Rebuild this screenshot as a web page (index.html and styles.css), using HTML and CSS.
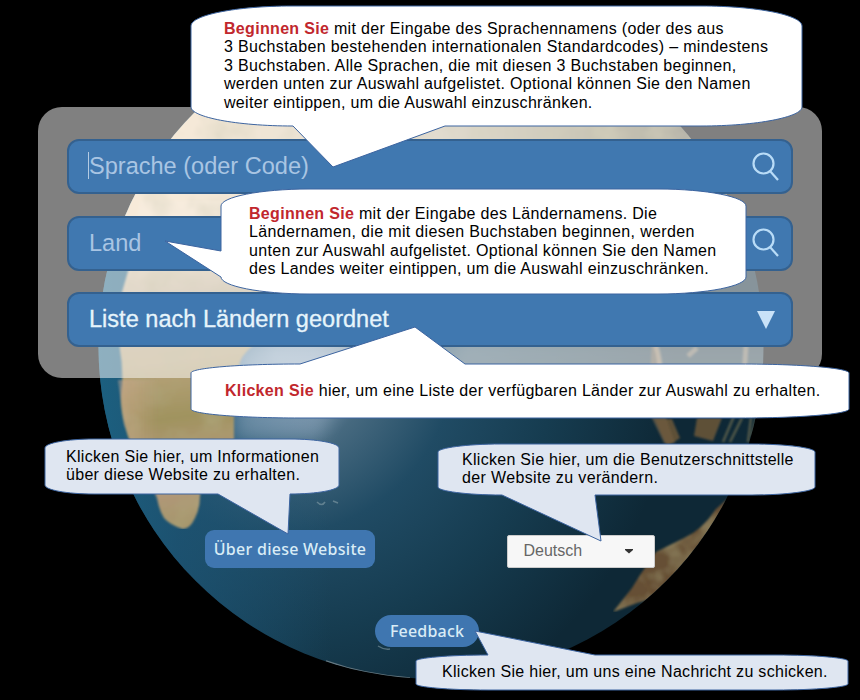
FILE: index.html
```html
<!DOCTYPE html>
<html lang="de">
<head>
<meta charset="utf-8">
<title>Global Recordings</title>
<link rel="stylesheet" href="styles.css">
</head>
<body>
<main class="stage">
  <svg class="globe" viewBox="0 0 860 700" aria-hidden="true">
    <defs>
      <radialGradient id="sea" gradientUnits="userSpaceOnUse" cx="275" cy="355" r="400">
        <stop offset="0" stop-color="#a3b5c9"/><stop offset=".1" stop-color="#839db5"/><stop offset=".25" stop-color="#46697f"/>
        <stop offset=".45" stop-color="#204b64"/><stop offset=".7" stop-color="#163c50"/><stop offset="1" stop-color="#0e2836"/>
      </radialGradient>
      <linearGradient id="rim" x1="0" x2="1" y1="0" y2="0">
        <stop offset="0" stop-color="#1c6080"/><stop offset=".12" stop-color="#1c5474" stop-opacity=".8"/><stop offset=".35" stop-color="#1c5474" stop-opacity="0"/>
      </linearGradient>
      <linearGradient id="land" gradientUnits="userSpaceOnUse" x1="150" y1="120" x2="200" y2="520">
        <stop offset="0" stop-color="#e8d2b0"/><stop offset=".25" stop-color="#efd9bc"/><stop offset=".45" stop-color="#bba98c"/>
        <stop offset=".6" stop-color="#b8a47c"/><stop offset=".74" stop-color="#a0935f"/><stop offset=".88" stop-color="#b89a80"/><stop offset="1" stop-color="#a6956c"/>
      </linearGradient>
      <linearGradient id="coast" gradientUnits="userSpaceOnUse" x1="118" y1="0" x2="160" y2="0">
        <stop offset="0" stop-color="#d3ad96" stop-opacity=".8"/><stop offset="1" stop-color="#d3ad96" stop-opacity="0"/>
      </linearGradient>
      <linearGradient id="north" gradientUnits="userSpaceOnUse" x1="170" y1="0" x2="750" y2="0">
        <stop offset="0" stop-color="#eed5b2"/><stop offset=".45" stop-color="#c5b9a0"/><stop offset=".75" stop-color="#8f8768"/><stop offset="1" stop-color="#565444"/>
      </linearGradient>
      <filter id="rough" x="0" y="0" width="1" height="1">
        <feTurbulence type="fractalNoise" baseFrequency=".035" numOctaves="3" seed="8" result="n"/>
        <feColorMatrix in="n" values="0 0 0 0 .42  0 0 0 0 .38  0 0 0 0 .2  1.2 0 0 0 -.5" result="t"/>
        <feComposite in="t" in2="SourceGraphic" operator="in" result="p"/>
        <feMerge><feMergeNode in="SourceGraphic"/><feMergeNode in="p"/></feMerge>
        <feGaussianBlur stdDeviation=".8"/>
      </filter>
      <filter id="soft"><feGaussianBlur stdDeviation="8"/></filter>
      <filter id="haze"><feGaussianBlur stdDeviation="1.200"/></filter>
      <clipPath id="disc"><circle cx="431" cy="346" r="332.500"/></clipPath>
    </defs>
    <g clip-path="url(#disc)">
      <rect width="860" height="700" fill="url(#sea)"/>
      <rect x="98" width="666" height="700" fill="url(#rim)"/>
      <path d="M240 352H360L320 440H234Z" fill="#b7c8db" opacity=".3" filter="url(#soft)"/>
      <path d="M460 340H780V385H440Z" fill="#6c7b82" opacity=".45" filter="url(#soft)"/>
      <path d="M90 0H740V215H560L220 230H90Z" fill="url(#north)" filter="url(#rough)"/>
      <path d="M140 200H330L300 300L262 340Q244 350 240 362Q233 380 234 400V440Q226 458 214 468Q202 480 200 496Q200 508 195 518Q190 529 183 529Q170 525 164 518Q159 510 157 498Q150 480 142 466Q129 445 125 425Q119 404 122 384Q123 366 120 350Q117 320 122 292L129 268Z" fill="url(#land)" filter="url(#rough)"/>
      <path d="M118 380H160V440L176 520L162 516L142 466L124 425Z" fill="url(#coast)" opacity=".6" filter="url(#haze)"/>
      <g filter="url(#haze)">
        <path d="M652 340L657 346L664 376L660 400L675 443H664L648 410Z" fill="#826b4c" opacity=".6"/>
        <path d="M655 419H672L680 438L667 447Z M697 418H722L713 441L694 436Z" fill="#725a3a" opacity=".8"/>
        <path d="M734 416L723 442M742 418L730 442M751 418L748 442M757 416L752 436" fill="none" stroke="#6f6d51" stroke-width="2.500" opacity=".7"/>
        <path d="M656 346Q660 356 661 380M697 348L688 356M746 346L744 376" fill="none" stroke="#c2a27c" stroke-width="5" opacity=".5"/>
      </g>
      <path d="M740 488L716 509Q702 530 684 538L656 552L640 575L632 588L613 612L637 603L662 596L725 545L768 488Z" fill="#665036" filter="url(#rough)"/>
      <path d="M378 646Q384 650 390 649M317 502Q322 507 325 502M333 501L338 503" fill="none" stroke="#a4b7bd" stroke-width="1.500" opacity=".45"/>
      <path d="M326 661Q365 675 410 678" fill="none" stroke="#9ba4a7" stroke-width="1.500" opacity=".6"/>
    </g>
  </svg>

  <form class="panel">
    <label class="field"><span class="hint caret">Sprache (oder Code)</span>
      <svg class="lens" viewBox="0 0 28 30"><circle cx="11.500" cy="11.500" r="10"/><path d="M18 19L26 28"/></svg></label>
    <label class="field"><span class="hint">Land</span>
      <svg class="lens" viewBox="0 0 28 30"><circle cx="11.500" cy="11.500" r="10"/><path d="M18 19L26 28"/></svg></label>
    <div class="field"><span class="choice">Liste nach Ländern geordnet</span>
      <svg class="arrow" viewBox="0 0 20 20"><path d="M1 1H19L10 19Z"/></svg></div>
  </form>

  <nav class="links">
    <a class="about">Über diese Website</a>
    <div class="lang"><span>Deutsch</span><svg viewBox="0 0 8 6"><path d="M0 1H8V2L4 5.500L0 2Z"/></svg></div>
  </nav>
  <div class="foot"><a class="feedback">Feedback</a></div>

  <aside class="callout c1">
    <svg viewBox="0 0 611 120"><path d="M0 20C0 9 45 0 101 0H510C566 0 611 9 611 20V101C611 111 566 120 510 120H254L142 161L102 120C45 120 0 111 0 101Z"/></svg>
    <p><span class="l1"><b>Beginnen Sie</b> mit der Eingabe des Sprachennamens (oder des aus</span><span class="l2">3 Buchstaben bestehenden internationalen Standardcodes) – mindestens</span><span class="l3">3 Buchstaben. Alle Sprachen, die mit diesen 3 Buchstaben beginnen,</span><span class="l4">werden unten zur Auswahl aufgelistet. Optional können Sie den Namen</span><span class="l5">weiter eintippen, um die Auswahl einzuschränken.</span></p>
  </aside>
  <aside class="callout c2">
    <svg viewBox="0 0 525 105"><path d="M0 17C0 8 39 0 88 0H437C486 0 525 8 525 17V88C525 97 486 105 437 105H88C39 105 0 97 0 88L-56 52L0 62Z"/></svg>
    <p><span class="l1"><b>Beginnen Sie</b> mit der Eingabe des Ländernamens. Die</span><span class="l2">Ländernamen, die mit diesen Buchstaben beginnen, werden</span><span class="l3">unten zur Auswahl aufgelistet. Optional können Sie den Namen</span><span class="l4">des Landes weiter eintippen, um die Auswahl einzuschränken.</span></p>
  </aside>
  <aside class="callout c3">
    <svg viewBox="0 0 658 54"><path d="M0 9C0 4 49 0 109 0L224 -37L274 0H549C609 0 658 4 658 9V45C658 50 609 54 549 54H109C49 54 0 50 0 45Z"/></svg>
    <p><span class="l1"><b>Klicken Sie</b> hier, um eine Liste der verfügbaren Länder zur Auswahl zu erhalten.</span></p>
  </aside>
  <aside class="callout pale c4">
    <svg viewBox="0 0 294 55"><path d="M0 9C0 4 22 0 49 0H245C272 0 294 4 294 9V46C294 51 272 55 245 55L243 95L173 55H49C22 55 0 51 0 46Z"/></svg>
    <p><span class="l1">Klicken Sie hier, um Informationen</span><span class="l2">über diese Website zu erhalten.</span></p>
  </aside>
  <aside class="callout pale c5">
    <svg viewBox="0 0 377 51"><path d="M0 8C0 4 28 0 63 0H314C349 0 377 4 377 8V43C377 47 349 51 314 51H157L163 97L64 51C28 51 0 47 0 43Z"/></svg>
    <p><span class="l1">Klicken Sie hier, um die Benutzerschnittstelle</span><span class="l2">der Website zu verändern.</span></p>
  </aside>
  <aside class="callout pale c6">
    <svg viewBox="0 0 432 35"><path d="M0 6C0 3 32 0 72 0L59 -24L179 0H360C400 0 432 3 432 6V29C432 32 400 35 360 35H72C32 35 0 32 0 29Z"/></svg>
    <p><span class="l1">Klicken Sie hier, um uns eine Nachricht zu schicken.</span></p>
  </aside>
</main>
</body>
</html>
```
FILE: styles.css
```css
* { box-sizing: border-box; }
body { margin: 0; background: #000; font-family: "Liberation Sans", Arial, sans-serif; }
.stage { position: relative; width: 860px; height: 700px; overflow: hidden; background: #000; padding-top: 107px; }
.globe { position: absolute; inset: 0; width: 860px; height: 700px; }

.panel { position: relative; width: 784px; height: 271px; margin-left: 38px; padding: 32px 29px 0; border-radius: 24px;
  background: rgba(255, 255, 255, .5); display: flex; flex-direction: column; gap: 21.500px; }
.field { display: flex; align-items: center; justify-content: space-between; height: 55px; flex: none;
  padding: 0 12px 0 20px; border: 2px solid #34618f; border-radius: 12px; background: #4078b0; }
.hint, .choice { font-size: 23.550px; line-height: 28px; color: #a9c5e3; white-space: nowrap; margin-bottom: 1px; }
.choice { color: #e6f4fb; -webkit-text-stroke: .3px #e6f4fb; }
.caret { position: relative; }
.caret::before { content: ""; position: absolute; left: -1px; top: 0; width: 1px; height: 27px; background: #b4cbe3; }
.lens { width: 28px; height: 30px; margin-right: -1px; fill: none; stroke: #b9dcf7; stroke-width: 2.200; }
.arrow { width: 20px; height: 20px; margin: 0 3px 0 0; fill: #c9e2f8; }

.links { position: relative; display: flex; align-items: center; justify-content: space-between; height: 38px;
  margin: 152px 205px 0; }
.about { display: flex; align-items: center; justify-content: center; width: 170px; height: 38px; border-radius: 9px;
  background: #3f76b0; color: #d9ecf6; font: 500 16px "Noto Sans", sans-serif; letter-spacing: .27px; white-space: nowrap; }
.lang { display: flex; align-items: center; justify-content: space-between; width: 148px; height: 33px; margin-top: 4px;
  padding: 0 21px 0 15.500px; border: 1px solid #ccc; border-radius: 2px; background: #f7f7f7; color: #666; font-size: 16px; }
.lang svg { width: 8px; height: 6px; fill: #333; }
.foot { position: relative; display: flex; justify-content: center; margin-top: 47px; padding-right: 6px; }
.feedback { display: flex; align-items: center; justify-content: center; width: 104px; height: 32px; border-radius: 16px;
  background: #3f76b0; color: #d9ecf6; font: 500 16px "Noto Sans", sans-serif; letter-spacing: .2px; }

.callout { position: absolute; }
.callout > svg { position: absolute; inset: 0; width: 100%; height: 100%; overflow: visible; fill: #fff; stroke: #3c64a0; stroke-width: 1; }
.pale > svg { fill: #dfe6f1; }
.callout p { position: relative; margin: 0; font-size: 16px; line-height: 18.600px; letter-spacing: .32px; color: #000; white-space: nowrap; }
.callout span { display: block; }
.callout b { color: #c1272d; }
.c1 { left: 191px; top: 5.500px; width: 611px; height: 120px; padding: 14px 0 0 33px; }
.c1 .l2, .c1 .l3, .c2 .l2 { letter-spacing: .34px; }
.c1 .l5, .c4 span, .c6 .l1 { letter-spacing: .305px; }
.c2 { left: 220.500px; top: 189px; width: 525px; height: 105px; padding: 15.500px 0 0 28.500px; }
.c3 { left: 191px; top: 363.500px; width: 658px; height: 54px; padding: 18px 0 0 34px; }
.c4 { left: 45px; top: 438.500px; width: 294px; height: 55px; padding: 9px 0 0 21px; }
.c5 { left: 438px; top: 443.500px; width: 377px; height: 51px; padding: 7px 0 0 24px; }
.c5 .l1 { letter-spacing: .29px; }
.c5 .l2 { letter-spacing: .36px; }
.c6 { left: 416px; top: 654.500px; width: 432px; height: 35px; padding: 8px 0 0 26px; }
```
